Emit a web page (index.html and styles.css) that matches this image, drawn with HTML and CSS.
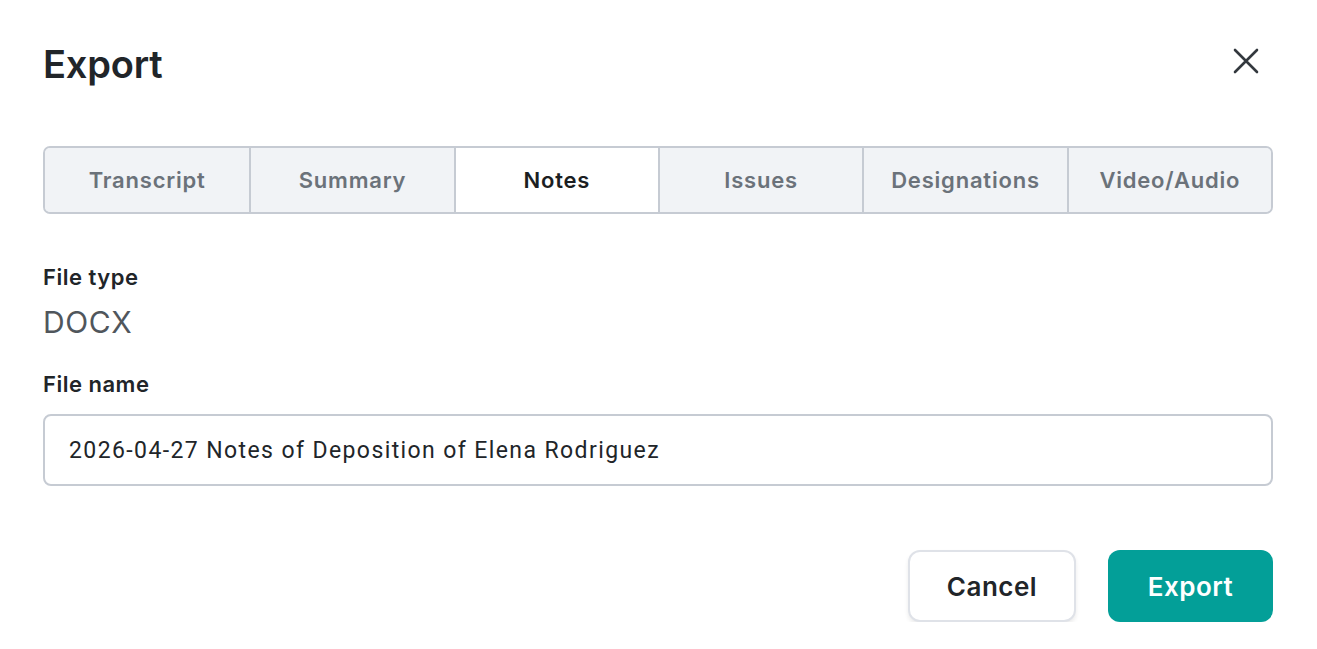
FILE: index.html
```html
<!DOCTYPE html>
<html lang="en">
<head>
    <meta charset="UTF-8">
    <meta name="viewport" content="width=device-width, initial-scale=1.0">
    <title>Export</title>
    <link rel="stylesheet" href="styles.css">
</head>
<body>

    <div class="dialog">

        <!-- Header -->
        <div class="dialog-header">
            <h1>Export</h1>
            <button class="close-btn" aria-label="Close">
                <svg width="26" height="26" viewBox="0 0 26 26">
                    <path d="M2 2 L24 24 M24 2 L2 24" stroke="#33383e" stroke-width="2.6" stroke-linecap="round" fill="none"/>
                </svg>
            </button>
        </div>

        <!-- Tabs -->
        <div class="tabs">
            <button class="tab">Transcript</button>
            <button class="tab">Summary</button>
            <button class="tab active">Notes</button>
            <button class="tab">Issues</button>
            <button class="tab">Designations</button>
            <button class="tab">Video/Audio</button>
        </div>

        <!-- Fields -->
        <div class="field field-type">
            <label>File type</label>
            <div class="file-type">DOCX</div>
        </div>

        <div class="field field-name">
            <label for="fileName">File name</label>
            <input type="text" id="fileName" value="2026-04-27 Notes of Deposition of Elena Rodriguez">
        </div>

        <!-- Footer -->
        <div class="dialog-footer">
            <button class="btn btn-cancel">Cancel</button>
            <button class="btn btn-export">Export</button>
        </div>
    </div>

</body>
</html>
```

FILE: styles.css
```css
/* General Styling */
body {
    margin: 0;
    background: white;
    font-family: Inter, "Noto Sans", sans-serif;
    color: #212529;
}

.dialog {
    padding: 40px 44px 0 43px;
}

/* Header */
.dialog-header {
    display: flex;
    justify-content: space-between;
    align-items: center;
    height: 48px;
}

h1 {
    margin: 0;
    font-size: 38px;
    font-weight: 600;
    letter-spacing: -0.2px;
    color: #212529;
}

.close-btn {
    background: none;
    border: none;
    padding: 0;
    margin-right: 14px;
    margin-bottom: 6px;
    cursor: pointer;
    display: flex;
}

/* Tabs */
.tabs {
    display: grid;
    grid-template-columns: repeat(6, 1fr);
    margin-top: 58px;
    border: 2px solid #c6cbd3;
    border-radius: 7px;
    overflow: hidden;
    background: #f1f3f6;
}

.tab {
    height: 64px;
    border: none;
    border-left: 2px solid #c6cbd3;
    background: #f1f3f6;
    font-family: inherit;
    font-size: 22px;
    font-weight: 600;
    letter-spacing: 0.8px;
    color: #6b727a;
    cursor: pointer;
}

.tab:first-child {
    border-left: none;
}

.tab.active {
    background: white;
    color: #1b1e22;
}

/* Fields */
.field {
    display: flex;
    flex-direction: column;
}

.field-type {
    margin-top: 50px;
}

.field-name {
    margin-top: 31px;
}

label {
    font-size: 22px;
    font-weight: 600;
    letter-spacing: 0.5px;
    color: #212529;
}

.file-type {
    margin-top: 14px;
    font-size: 30px;
    font-weight: 400;
    letter-spacing: 0.6px;
    color: #50565c;
}

input {
    margin-top: 17px;
    height: 72px;
    box-sizing: border-box;
    padding: 0 24px;
    border: 2px solid #c6cbd3;
    border-radius: 8px;
    font-family: Roboto, "Noto Sans", sans-serif;
    font-size: 23px;
    letter-spacing: 1.4px;
    color: #212529;
}

/* Footer */
.dialog-footer {
    display: flex;
    justify-content: flex-end;
    gap: 32px;
    margin-top: 64px;
}

.btn {
    height: 72px;
    border-radius: 12px;
    font-family: inherit;
    font-size: 26px;
    font-weight: 600;
    letter-spacing: 0.5px;
    cursor: pointer;
}

.btn-cancel {
    width: 168px;
    background: white;
    border: 2px solid #dfe2e8;
    box-shadow: 0 3px 4px rgba(0,0,0,0.08);
    color: #212529;
}

.btn-export {
    width: 165px;
    background: #039f98;
    border: none;
    color: white;
}
```
